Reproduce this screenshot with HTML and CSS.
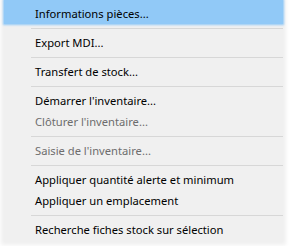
FILE: index.html
```html
<!DOCTYPE html>
<html lang="fr">
<head>
    <meta charset="UTF-8">
    <title>Menu stock</title>
    <link rel="stylesheet" href="styles.css">
</head>
<body>
    <div class="menu">
        <div class="item active first">Informations pièces...</div>
        <div class="sep"></div>
        <div class="item">Export MDI...</div>
        <div class="sep"></div>
        <div class="item">Transfert de stock...</div>
        <div class="sep"></div>
        <div class="item">Démarrer l'inventaire...</div>
        <div class="item disabled">Clôturer l'inventaire...</div>
        <div class="sep"></div>
        <div class="item disabled">Saisie de l'inventaire...</div>
        <div class="sep"></div>
        <div class="item">Appliquer quantité alerte et minimum</div>
        <div class="item">Appliquer un emplacement</div>
        <div class="sep"></div>
        <div class="item">Recherche fiches stock sur sélection</div>
    </div>
</body>
</html>
```
FILE: styles.css
```css
body {
    margin: 0;
    background-color: #fff;
    font-family: 'Noto Sans', 'Open Sans', sans-serif;
    font-size: 11.2px;
    width: 290px;
    height: 246px;
    overflow: hidden;
}

.menu {
    background-color: #f0f0f0;
    margin: 0 7px 0 4px;
    padding-bottom: 2px;
    box-shadow: 0 0 4px 3px #f0f0f0;
}

.item {
    height: 21px;
    line-height: 21px;
    padding-left: 31px;
    color: #000;
    white-space: nowrap;
}

.item.first {
    height: 24px;
    line-height: 28px;
}

.item.active {
    background-color: #91c9f7;
    box-shadow: 0 0 2px 1px #91c9f7;
}

.item.disabled {
    color: #6d6d6d;
}

.sep {
    height: 1px;
    background-color: #d7d7d7;
    margin: 4px 0 3px 27px;
}
```
